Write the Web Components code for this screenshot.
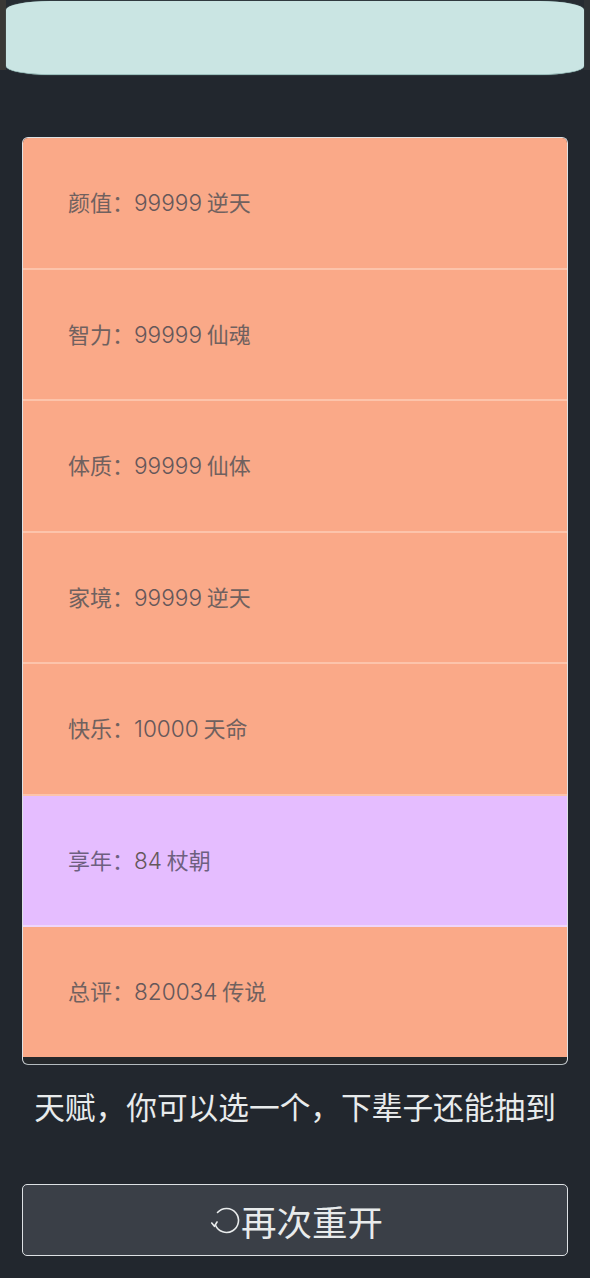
<!DOCTYPE html>
<html lang="zh">
<head>
<meta charset="utf-8">
<title>人生重开</title>
<style>
	html, body { margin: 0; padding: 0; background: #22272e; }
	body { font-family: "Inter", "Noto Sans CJK SC", sans-serif; }
</style>
</head>
<body>
<life-app>
	<life-banner></life-banner>
	<summary-list>
		<summary-row>颜值：<span>99999</span> 逆天</summary-row>
		<summary-row>智力：<span>99999</span> 仙魂</summary-row>
		<summary-row>体质：<span>99999</span> 仙体</summary-row>
		<summary-row>家境：<span>99999</span> 逆天</summary-row>
		<summary-row>快乐：<span>10000</span> 天命</summary-row>
		<summary-row grade="purple">享年：<span>84</span> 杖朝</summary-row>
		<summary-row>总评：<span>820034</span> 传说</summary-row>
	</summary-list>
	<talent-title>天赋，你可以选一个，下辈子还能抽到</talent-title>
	<restart-button>再次重开</restart-button>
</life-app>

<script>
class LifeApp extends HTMLElement
{
	constructor() {
		super();
		this.attachShadow({mode: 'open'}).innerHTML = `
			<style>
				:host {
					display: flex;
					flex-direction: column;
					box-sizing: border-box;
					width: 590px;
					height: 1278px;
					background: #22272e;
					overflow: hidden;
				}
			</style>
			<slot></slot>
		`;
	}
}

class LifeBanner extends HTMLElement
{
	constructor() {
		super();
		this.attachShadow({mode: 'open'}).innerHTML = `
			<style>
				:host {
					display: block;
					box-sizing: border-box;
					height: 76px;
					padding: 1px 6px;
					background: linear-gradient(90deg, #3a3936 6px, #262c32 6px, #262c32 584px, #2f3336 584px) no-repeat;
					background-size: 100% 70px;
				}
				div {
					height: 74px;
					background: #cae5e3;
					border-bottom: 1px solid #9cc0bd;
					box-sizing: border-box;
					border-radius: 44px / 9px;
					box-shadow: 0 0 1px #8fb5b2;
				}
			</style>
			<div></div>
		`;
	}
}

class SummaryList extends HTMLElement
{
	constructor() {
		super();
		this.attachShadow({mode: 'open'}).innerHTML = `
			<style>
				:host {
					display: block;
					box-sizing: border-box;
					height: 928px;
					margin: 61px 22px 0;
					border: 1px solid #dde1e4;
					border-bottom-color: #b4bbbf;
					border-radius: 6px;
					background: #25282b;
					overflow: hidden;
				}
				.rows {
					display: flex;
					flex-direction: column;
					height: 919px;
				}
				::slotted(summary-row) { flex: 1 1 0; min-height: 0; }
			</style>
			<div class="rows"><slot></slot></div>
		`;
	}
}

class SummaryRow extends HTMLElement
{
	constructor() {
		super();
		this.attachShadow({mode: 'open'}).innerHTML = `
			<style>
				:host {
					display: block;
					box-sizing: border-box;
					padding: 0 45px;
					background: #faa988;
					border-bottom: 2px solid #fcc4ab;
					color: #70615f;
					font-size: 22px;
					line-height: 130px;
					word-spacing: -1.5px;
					white-space: nowrap;
					overflow: hidden;
				}
				:host(:last-child) { border-bottom: 0; }
				:host([grade="purple"]) {
					background: #e5bdff;
					border-bottom-color: #efd6fb;
					color: #6e6080;
				}
				::slotted(span) {
					font-size: 22.6px;
					font-weight: 300;
					color: #65575a;
				}
			</style>
			<slot></slot>
		`;
	}
}

class TalentTitle extends HTMLElement
{
	constructor() {
		super();
		this.attachShadow({mode: 'open'}).innerHTML = `
			<style>
				:host {
					display: block;
					margin-top: 22px;
					color: #e8ebec;
					font-size: 30.7px;
					line-height: 42px;
					text-align: center;
					white-space: nowrap;
				}
			</style>
			<slot></slot>
		`;
	}
}

class RestartButton extends HTMLElement
{
	constructor() {
		super();
		this.attachShadow({mode: 'open'}).innerHTML = `
			<style>
				:host {
					display: flex;
					align-items: center;
					justify-content: center;
					box-sizing: border-box;
					height: 72px;
					margin: 55px 22px 0;
					border: 1px solid #dde1e4;
					border-radius: 5px;
					background: #3a3f47;
					color: #e8ebec;
					font-size: 35.5px;
				}
				svg { width: 30px; height: 29px; flex: none; margin-left: 4px; }
			</style>
			<svg viewBox="0 0 30 29" fill="none" stroke="currentColor" stroke-width="1.6" stroke-linecap="round" stroke-linejoin="round">
				<path d="M6.5 6.5A12 12 0 1 1 4.4 19"/>
				<path d="M0.8 17L3.4 20.3L6 16"/>
			</svg>
			<slot></slot>
		`;
	}
}

customElements.define('life-app', LifeApp);
customElements.define('life-banner', LifeBanner);
customElements.define('summary-list', SummaryList);
customElements.define('summary-row', SummaryRow);
customElements.define('talent-title', TalentTitle);
customElements.define('restart-button', RestartButton);
</script>
</body>
</html>
